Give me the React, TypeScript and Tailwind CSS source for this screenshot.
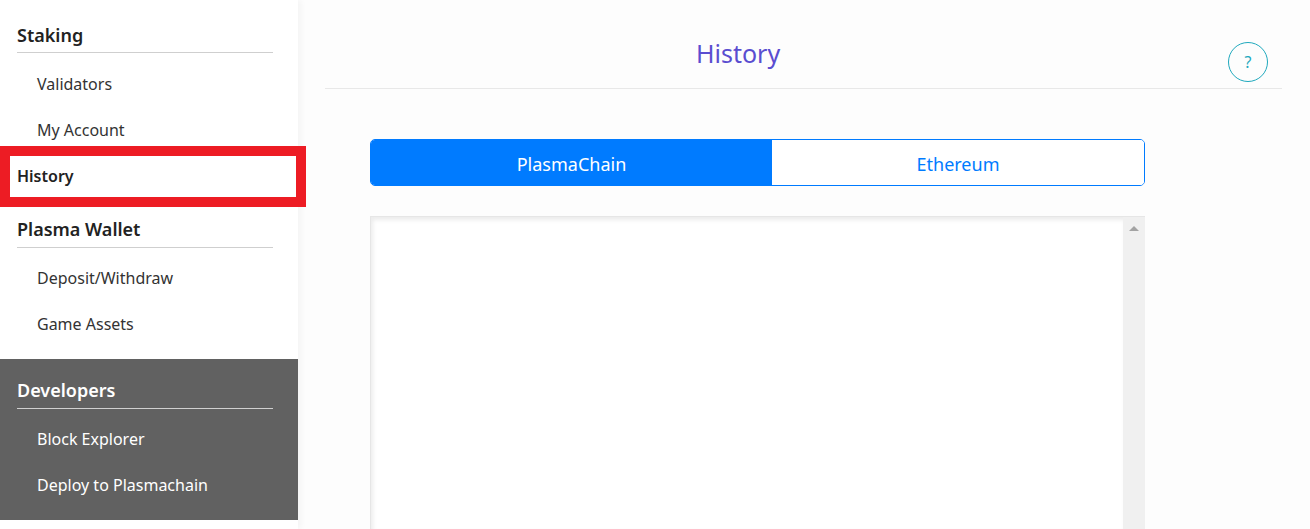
import React from "react";

const font = { fontFamily: '"Noto Sans", "Open Sans", sans-serif' };

function Heading({ children, dark, first }: { children: React.ReactNode; dark?: boolean; first?: boolean }) {
  return (
    <div className={`${first ? "pt-[22px] pb-[4px]" : "pt-[18px] pb-[5px]"} ml-[17px] w-[256px] border-b ${dark ? "border-[#d0d0d0] text-white" : "border-[#cfcfcf] text-[#222]"} text-[18px] font-semibold leading-[26px]`}>
      {children}
    </div>
  );
}

function Item({ children, dark }: { children: React.ReactNode; dark?: boolean }) {
  return (
    <div className={`h-[46px] flex items-center pt-[1px] pl-[37px] text-[16px] ${dark ? "text-white" : "text-[#333]"}`}>
      {children}
    </div>
  );
}

export default function App() {
  return (
    <div className="flex w-[1310px] h-[529px] overflow-hidden bg-[#fdfdfd]" style={font}>
      <aside className="relative z-10 w-[298px] shrink-0 bg-white shadow-[3px_0_6px_rgba(0,0,0,0.04)]">
        <Heading first>Staking</Heading>
        <div className="pt-[7px]">
          <Item>Validators</Item>
          <Item>My Account</Item>
          <div className="relative h-[46px] flex items-center pt-[1px] pl-[17px] text-[16px] font-semibold text-[#222]">
            History
            <div className="absolute left-0 top-[-6px] w-[306px] h-[61px] border-[10px] border-[#ed1c24]" />
          </div>
        </div>
        <Heading>Plasma Wallet</Heading>
        <div className="pt-[6px] pb-[13px]">
          <Item>Deposit/Withdraw</Item>
          <Item>Game Assets</Item>
        </div>
        <div className="bg-[#616161] pb-[13px]">
          <Heading dark>Developers</Heading>
          <div className="pt-[6px]">
            <Item dark>Block Explorer</Item>
            <Item dark>Deploy to Plasmachain</Item>
          </div>
        </div>
      </aside>
      <main className="flex-1 flex flex-col">
        <div className="ml-[27px] mr-[28px] h-[89px] border-b border-[#e8e8e8] flex items-start">
          <h1 className="ml-[371px] mt-[36px] text-[25px] leading-[34px] text-[#5a4dd0]">History</h1>
          <button className="ml-auto mr-[14px] mt-[42px] w-[40px] h-[40px] rounded-full border border-[#1fa9bd] text-[#1fa9bd] text-[16px] flex items-center justify-center">
            ?
          </button>
        </div>
        <div className="ml-[72px] w-[775px] mt-[50px] h-[47px] flex rounded-[5px] border border-[#007bff] overflow-hidden">
          <div className="w-[401px] pt-[3px] bg-[#007bff] text-white text-[18px] flex items-center justify-center">PlasmaChain</div>
          <div className="flex-1 pt-[3px] bg-white text-[#007bff] text-[18px] flex items-center justify-center">Ethereum</div>
        </div>
        <div className="ml-[72px] w-[775px] mt-[30px] flex-1 flex border-t border-l border-[#e6e6e6]">
          <div className="flex-1 bg-white shadow-[inset_2px_3px_4px_rgba(0,0,0,0.08)]" />
          <div className="w-[22px] bg-[#f0f0f0] flex justify-center pt-[9px]">
            <div className="w-0 h-0 border-l-[5px] border-r-[5px] border-b-[5px] border-l-transparent border-r-transparent border-b-[#a3a3a3]" />
          </div>
        </div>
      </main>
    </div>
  );
}
